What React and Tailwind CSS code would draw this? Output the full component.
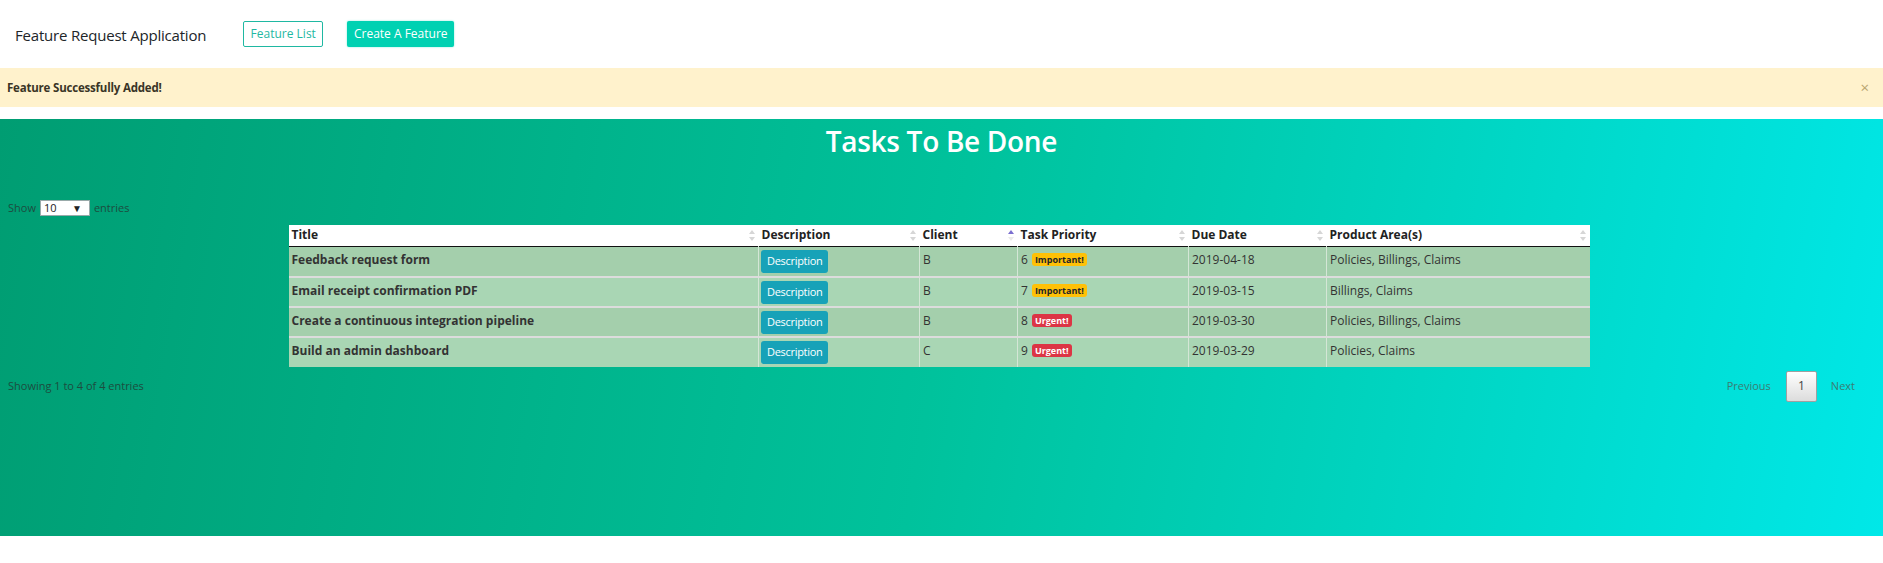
import React from 'react';

const rows = [
  { title: 'Feedback request form', client: 'B', priority: 6, level: 'important', due: '2019-04-18', areas: 'Policies, Billings, Claims' },
  { title: 'Email receipt confirmation PDF', client: 'B', priority: 7, level: 'important', due: '2019-03-15', areas: 'Billings, Claims' },
  { title: 'Create a continuous integration pipeline', client: 'B', priority: 8, level: 'urgent', due: '2019-03-30', areas: 'Policies, Billings, Claims' },
  { title: 'Build an admin dashboard', client: 'C', priority: 9, level: 'urgent', due: '2019-03-29', areas: 'Policies, Claims' }
];

const columns = [
  { label: 'Title', width: 'w-[470px]' },
  { label: 'Description', width: 'w-[161px]' },
  { label: 'Client', width: 'w-[98px]', active: true },
  { label: 'Task Priority', width: 'w-[171px]' },
  { label: 'Due Date', width: 'w-[138px]' },
  { label: 'Product Area(s)', width: 'w-[263px]' }
];

function SortIcon({ active }) {
  return (
    <svg width="6" height="11" viewBox="0 0 6 11" className="shrink-0">
      <path d="M3 0 L6 4 L0 4 Z" fill={active ? '#7b6fd0' : '#d6d6d6'} />
      <path d="M3 11 L6 7 L0 7 Z" fill={active ? '#eaeaea' : '#d6d6d6'} />
    </svg>
  );
}

export default function App() {
  return (
    <div className="w-[1883px] h-[563px] bg-white font-['Open_Sans',sans-serif] text-[#212529] overflow-hidden">

      {/* Navbar */}
      <nav className="h-[68px] flex items-center pl-[15px]">
        <span className="text-[15px] mt-[3px] tracking-[-0.2px]">Feature Request Application</span>
        <button className="ml-[37px] w-[80px] h-[26px] border border-[#1fb8a2] rounded-[2px] text-[12px] text-[#1fb8a2] flex items-center justify-center">
          Feature List
        </button>
        <button className="ml-[24px] w-[107px] h-[26px] bg-[#00d1b2] rounded-[2px] text-[12px] text-white flex items-center justify-center shadow-[0_0_2px_#7ee8d8]">
          Create A Feature
        </button>
      </nav>

      {/* Alert */}
      <div className="h-[39px] bg-[#fff2cc] flex items-center justify-between pl-[7px] pr-[14px]">
        <span className="text-[11.5px] font-bold text-[#3a3526] tracking-[-0.2px]">Feature Successfully Added!</span>
        <span className="text-[15px] text-[#b9a56e] leading-none">×</span>
      </div>

      {/* Content */}
      <div className="mt-[12px] h-[417px] bg-[linear-gradient(100deg,#009d72_0%,#00c29c_50%,#00e8e8_100%)]">
        <h1 className="pt-[1px] text-center text-[28px] font-semibold text-white tracking-[-0.3px]">Tasks To Be Done</h1>

        <div className="mt-[38px] pl-[8px] flex items-center gap-[4px] text-[11px] text-[#1d4d3f]">
          <span>Show</span>
          <div className="w-[50px] h-[16px] bg-white border border-[#9aa] flex items-center justify-between px-[3px] text-[11px] text-[#222]">
            <span>10</span>
            <span className="text-[10px] mr-[4px]">▼</span>
          </div>
          <span>entries</span>
        </div>

        <div className="mt-[8px] flex justify-center">
          <table className="w-[1301px] border-collapse text-[12px] text-[#333] ml-[-5px]">
            <thead>
              <tr className="bg-white h-[22px] border-b-[1.5px] border-[#111]">
                {columns.map((c) => (
                  <th key={c.label} className={`${c.width} p-0 font-bold text-left text-[#222]`}>
                    <div className="flex items-center justify-between pl-[3px] pr-[4px]">
                      <span>{c.label}</span>
                      <SortIcon active={c.active} />
                    </div>
                  </th>
                ))}
              </tr>
            </thead>
            <tbody>
              {rows.map((r, i) => (
                <tr key={r.title} className={`h-[30px] ${i > 0 ? 'border-t-[2px] border-[#dcdcdc]' : ''} ${i % 2 === 0 ? 'bg-[#a4cfac]' : 'bg-[#a9d6b4]'}`}>
                  <td className="align-top pt-[4px] pl-[3px] font-bold border-r border-[#d4e6d6]">{r.title}</td>
                  <td className="align-top pt-[3px] pl-[2px] border-r border-[#d4e6d6]">
                    <button className="h-[23px] px-[6px] bg-[#17a2b8] rounded-[3px] text-[11px] text-white tracking-[-0.3px]">Description</button>
                  </td>
                  <td className="align-top pt-[4px] pl-[3px] border-r border-[#d4e6d6]">{r.client}</td>
                  <td className="align-top pt-[4px] pl-[3px] border-r border-[#d4e6d6]">
                    <span>{r.priority}</span>
                    {r.level === 'important' ? (
                      <span className="ml-[4px] inline-block px-[3px] h-[13px] leading-[13px] rounded-[3px] bg-[#ffc107] text-[#212529] text-[9px] font-bold align-[1px]">Important!</span>
                    ) : (
                      <span className="ml-[4px] inline-block px-[3px] h-[13px] leading-[13px] rounded-[3px] bg-[#dc3545] text-white text-[9px] font-bold align-[1px]">Urgent!</span>
                    )}
                  </td>
                  <td className="align-top pt-[4px] pl-[3px] border-r border-[#d4e6d6]">{r.due}</td>
                  <td className="align-top pt-[4px] pl-[3px]">{r.areas}</td>
                </tr>
              ))}
            </tbody>
          </table>
        </div>

        <div className="mt-[4px] flex items-center justify-between pl-[8px] pr-[28px]">
          <span className="text-[11px] text-[#1d4d3f]">Showing 1 to 4 of 4 entries</span>
          <div className="flex items-center text-[11px] text-[#3b7d73]">
            <span>Previous</span>
            <span className="ml-[15px] w-[31px] h-[31px] flex items-center justify-center border border-[#a0a0a0] rounded-[2px] bg-[linear-gradient(#ffffff,#dcdcdc)] text-[#444] text-[12px]">1</span>
            <span className="ml-[14px]">Next</span>
          </div>
        </div>
      </div>
    </div>
  );
}
